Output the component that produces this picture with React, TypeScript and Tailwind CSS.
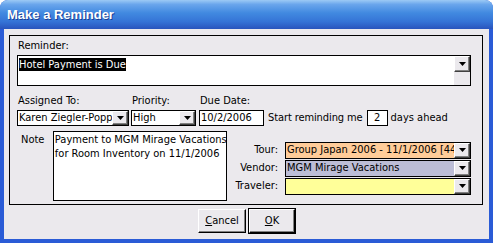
import React from "react";

const font = "font-['DejaVu_Sans_Condensed','Liberation_Sans',Arial,sans-serif]";

function Arrow() {
  return (
    <svg width="7" height="4" viewBox="0 0 7 4" className="block">
      <path d="M0 0h7L3.5 4z" fill="#000" />
    </svg>
  );
}

function DropButton({ className = "" }: { className?: string }) {
  return (
    <div
      className={`flex w-[16px] shrink-0 items-center justify-center border border-b-[#404040] border-l-white border-r-[#404040] border-t-white bg-[#ebe9ed] shadow-[inset_-1px_-1px_#808080] ${className}`}
    >
      <Arrow />
    </div>
  );
}

function Combo({
  value,
  width,
  height = "h-[16px]",
  bg = "bg-white",
}: {
  value: string;
  width: string;
  height?: string;
  bg?: string;
}) {
  return (
    <div className={`flex ${width} ${height} shrink-0 border border-black ${bg}`}>
      <div className="flex-1 overflow-hidden whitespace-nowrap pl-[1px] leading-[14px]">
        {value}
      </div>
      <DropButton />
    </div>
  );
}

function Button({ label, def = false }: { label: React.ReactNode; def?: boolean }) {
  return (
    <div className={def ? "border border-black" : "border border-transparent"}>
      <div
        className={`flex h-[24px] items-center justify-center border border-b-black border-l-white border-r-black border-t-white bg-[#ebe9ed] shadow-[inset_-1px_-1px_#808080] ${
          def ? "w-[46px]" : "w-[48px]"
        }`}
      >
        {label}
      </div>
    </div>
  );
}

export default function App() {
  return (
    <div
      className={`flex h-[243px] w-[493px] flex-col overflow-hidden rounded-t-[8px] bg-[#2a5bd6] text-[11px] text-black ${font}`}
    >
      <div className="flex h-[29px] shrink-0 items-center bg-[linear-gradient(180deg,#9ccaf5_0%,#6aa6ec_15%,#4189e0_45%,#3573d6_75%,#2954bd_100%)] pl-[7px]">
        <span className="font-['Liberation_Sans',Arial,sans-serif] text-[13px] font-bold leading-none text-white [text-shadow:1px_1px_#1c3f94]">
          Make a Reminder
        </span>
      </div>

      <div className="mx-[4px] mb-[4px] flex flex-1 flex-col bg-[#ebe9ed] px-[5px] pt-[6px]">
        <div className="flex h-[170px] w-[474px] flex-col border border-black pl-[7px] pr-[11px]">
          <div className="mt-[3px] pl-[1px] leading-[13px]">Reminder:</div>

          <div className="mt-[3px] flex h-[31px] border border-black bg-white">
            <div className="flex-1 pl-[1px] pt-[1px]">
              <span className="bg-black leading-[14px] text-white">Hotel Payment is Due</span>
            </div>
            <div className="flex w-[16px] flex-col bg-[#ebe9ed]">
              <DropButton className="h-[16px]" />
            </div>
          </div>

          <div className="mt-[8px] flex leading-[13px]">
            <div className="w-[114px] pl-[1px]">Assigned To:</div>
            <div className="w-[68px] pl-[1px]">Priority:</div>
            <div className="pl-[1px]">Due Date:</div>
          </div>

          <div className="mt-[3px] flex items-center">
            <Combo value="Karen Ziegler-Popp" width="w-[112px]" />
            <div className="ml-[2px]">
              <Combo value="High" width="w-[65px]" />
            </div>
            <div className="ml-[3px] h-[16px] w-[65px] border border-black bg-white pl-[1px] leading-[14px]">
              10/2/2006
            </div>
            <span className="ml-[4px] tracking-[-0.1px]">Start reminding me</span>
            <div className="ml-[4px] h-[16px] w-[21px] border border-black bg-white text-center leading-[14px]">
              2
            </div>
            <span className="ml-[3px]">days ahead</span>
          </div>

          <div className="mt-[4px] flex">
            <div className="w-[36px] pl-[4px] pt-[2px] leading-[13px]">Note</div>
            <div className="h-[70px] w-[175px] overflow-hidden whitespace-nowrap border border-black bg-white pl-[1px] pt-[1px] leading-[14px]">
              Payment to MGM Mirage Vacations
              <br />
              for Room Inventory on 11/1/2006
            </div>
            <div className="ml-[1px] mt-[11px] flex flex-col gap-[1px]">
              {[
                { label: "Tour:", value: "Group Japan 2006 - 11/1/2006 [44-Day Tour]", bg: "bg-[#ffcc99]" },
                { label: "Vendor:", value: "MGM Mirage Vacations", bg: "bg-[#bcbdd6]" },
                { label: "Traveler:", value: "", bg: "bg-[#ffff99]" },
              ].map((row) => (
                <div key={row.label} className="flex items-center">
                  <div className="w-[50px] text-right">{row.label}</div>
                  <div className="ml-[7px]">
                    <Combo value={row.value} width="w-[186px]" height="h-[17px]" bg={row.bg} />
                  </div>
                </div>
              ))}
            </div>
          </div>
        </div>

        <div className="mt-[3px] flex justify-center gap-[1px]">
          <Button
            label={
              <span>
                <span className="underline">C</span>ancel
              </span>
            }
          />
          <Button
            def
            label={
              <span>
                <span className="underline">O</span>K
              </span>
            }
          />
        </div>
      </div>
    </div>
  );
}
